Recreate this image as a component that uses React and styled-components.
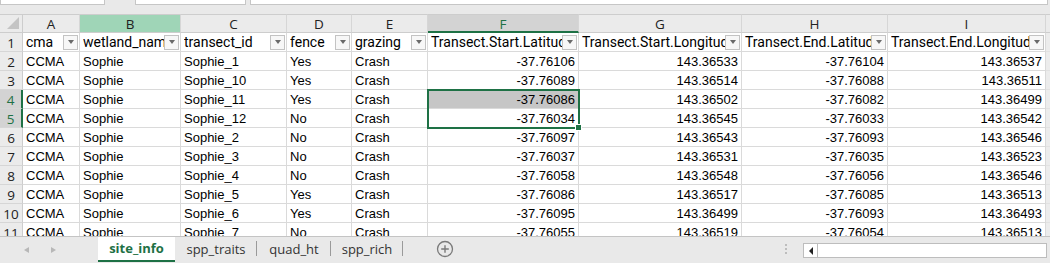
import React from "react";
import styled, { createGlobalStyle, css } from "styled-components";

const GlobalStyle = createGlobalStyle`
  html, body { margin: 0; padding: 0; background: #e9e9e9; overflow: hidden; }
  * { box-sizing: border-box; }
`;

const COLS = [
  { key: "A", w: 57, title: "cma" },
  { key: "B", w: 101, title: "wetland_name" },
  { key: "C", w: 106, title: "transect_id" },
  { key: "D", w: 65, title: "fence" },
  { key: "E", w: 76, title: "grazing" },
  { key: "F", w: 151, title: "Transect.Start.Latitude", num: true },
  { key: "G", w: 163, title: "Transect.Start.Longitude", num: true },
  { key: "H", w: 146, title: "Transect.End.Latitude", num: true },
  { key: "I", w: 158, title: "Transect.End.Longitude", num: true },
];

const ROWS = [
  ["Sophie_1", "Yes", "-37.76106", "143.36533", "-37.76104", "143.36537"],
  ["Sophie_10", "Yes", "-37.76089", "143.36514", "-37.76088", "143.36511"],
  ["Sophie_11", "Yes", "-37.76086", "143.36502", "-37.76082", "143.36499"],
  ["Sophie_12", "No", "-37.76034", "143.36545", "-37.76033", "143.36542"],
  ["Sophie_2", "No", "-37.76097", "143.36543", "-37.76093", "143.36546"],
  ["Sophie_3", "No", "-37.76037", "143.36531", "-37.76035", "143.36523"],
  ["Sophie_4", "No", "-37.76058", "143.36548", "-37.76056", "143.36546"],
  ["Sophie_5", "Yes", "-37.76086", "143.36517", "-37.76085", "143.36513"],
  ["Sophie_6", "Yes", "-37.76095", "143.36499", "-37.76093", "143.36493"],
  ["Sophie_7", "No", "-37.76055", "143.36519", "-37.76054", "143.36513"],
];

const GREEN = "#1e7145";

const Frame = styled.div`
  width: 1050px;
  height: 263px;
  display: flex;
  flex-direction: column;
  background: #e9e9e9;
`;

const TopStrip = styled.div`
  height: 14px;
  display: flex;
  align-items: flex-start;
`;

const FormulaBox = styled.div`
  height: 5px;
  width: ${(p) => p.$w}px;
  margin-left: ${(p) => p.$ml || 0}px;
  background: #fff;
  border: 1px solid #c6c6c6;
  border-top: none;
`;

const Sheet = styled.div`
  position: relative;
  height: 222px;
  overflow: hidden;
  display: grid;
  grid-template-columns: 23px ${COLS.map((c) => c.w + "px").join(" ")} 1fr;
  grid-auto-rows: 19px;
  background: #fff;
`;

const Corner = styled.div`
  background: #ebebeb;
  border-right: 1px solid #cdcdcd;
  border-bottom: 1px solid #cdcdcd;
  border-top: 1px solid #cdcdcd;
  position: relative;
  &::after {
    content: "";
    position: absolute;
    right: 3px;
    bottom: 3px;
    width: 0;
    height: 0;
    border-left: 12px solid transparent;
    border-bottom: 12px solid #c4c4c4;
  }
`;

const ColHead = styled.div`
  background: #ebebeb;
  border-top: 1px solid #cdcdcd;
  border-right: 1px solid #d6d6d6;
  border-bottom: 1px solid #cdcdcd;
  font-family: "Open Sans", "Liberation Sans", sans-serif;
  font-size: 13.5px;
  color: #222;
  display: flex;
  align-items: center;
  justify-content: center;
  padding-top: 1px;
  ${(p) =>
    p.$state === "green" &&
    css`
      background: #9fd5b7;
    `}
  ${(p) =>
    p.$state === "sel" &&
    css`
      background: #d3d3d3;
      color: ${GREEN};
      border-bottom: 2px solid ${GREEN};
    `}
  ${(p) =>
    p.$state === "end" &&
    css`
      border-right: none;
    `}
`;

const RowHead = styled.div`
  background: #ebebeb;
  border-right: 1px solid #cdcdcd;
  border-bottom: 1px solid #d6d6d6;
  font-family: "Open Sans", "Liberation Sans", sans-serif;
  font-size: 13.5px;
  color: #222;
  display: flex;
  align-items: center;
  justify-content: center;
  padding-top: 1px;
  ${(p) =>
    p.$sel &&
    css`
      background: #d3d3d3;
      color: ${GREEN};
      border-right: 2px solid ${GREEN};
    `}
`;

const Cell = styled.div`
  border-right: 1px solid #dadada;
  border-bottom: 1px solid #dadada;
  font-family: "Liberation Sans", Arial, sans-serif;
  font-size: 13px;
  color: #000;
  white-space: nowrap;
  overflow: hidden;
  line-height: 18px;
  padding: 1px 3px 0 3px;
  text-align: ${(p) => (p.$num ? "right" : "left")};
  background: ${(p) => (p.$fill ? "#c6c6c6" : "#fff")};
`;

const HeadCell = styled(Cell)`
  display: flex;
  align-items: center;
  padding: 0 1px 0 3px;
  text-align: left;
  font-family: Roboto, "Liberation Sans", sans-serif;
  font-size: 14px;
`;

const HeadText = styled.span`
  flex: 1;
  min-width: 0;
  overflow: hidden;
  white-space: nowrap;
`;

const FilterBtn = styled.span`
  flex: none;
  width: 15px;
  height: 15px;
  border: 1px solid #c3c3c3;
  background: #f7f7f7;
  display: flex;
  align-items: center;
  justify-content: center;
  &::before {
    content: "";
    border-left: 3.5px solid transparent;
    border-right: 3.5px solid transparent;
    border-top: 4px solid #6a6a6a;
  }
`;

const Gutter = styled.div`
  background: #ececec;
  border-bottom: 1px solid #e2e2e2;
`;

const Selection = styled.div`
  position: absolute;
  left: 427px;
  top: 75px;
  width: 153px;
  height: 40px;
  border: 2px solid ${GREEN};
  pointer-events: none;
  &::after {
    content: "";
    position: absolute;
    right: -4px;
    bottom: -4px;
    width: 5px;
    height: 5px;
    background: ${GREEN};
    border: 1px solid #fff;
  }
`;

const TabBar = styled.div`
  height: 27px;
  border-top: 1px solid #c4c4c4;
  background: #e9e9e9;
  display: flex;
  align-items: stretch;
`;

const NavArea = styled.div`
  width: 98px;
  display: flex;
  align-items: center;
  padding-left: 24px;
  gap: 22px;
`;

const NavArrow = styled.span`
  width: 0;
  height: 0;
  border-top: 3.5px solid transparent;
  border-bottom: 3.5px solid transparent;
  ${(p) =>
    p.$dir === "left"
      ? css`border-right: 5px solid #b8b8b8;`
      : css`border-left: 5px solid #b8b8b8;`}
`;

const Tab = styled.div`
  width: ${(p) => p.$w}px;
  display: flex;
  align-items: center;
  justify-content: center;
  font-family: "Open Sans", "Liberation Sans", sans-serif;
  font-size: 13px;
  color: #333;
  position: relative;
  padding-bottom: 2px;
  ${(p) =>
    p.$active
      ? css`
          background: #fff;
          color: ${GREEN};
          font-weight: 700;
          border-bottom: 2px solid ${GREEN};
          margin-bottom: 1px;
        `
      : css`
          &::after {
            content: "";
            position: absolute;
            right: 0;
            top: 4px;
            bottom: 7px;
            width: 1px;
            background: #9a9a9a;
          }
        `}
`;

const AddBtn = styled.div`
  width: 34px;
  margin-left: 33px;
  display: flex;
  align-items: center;
  justify-content: flex-start;
  padding-bottom: 2px;
`;

const Spacer = styled.div`
  flex: 1;
`;

const Grip = styled.div`
  width: 6px;
  margin-right: 14px;
  display: flex;
  flex-direction: column;
  justify-content: center;
  align-items: center;
  gap: 2px;
  padding-bottom: 3px;
  & > i {
    width: 2px;
    height: 2px;
    background: #bdbdbd;
  }
`;

const HScroll = styled.div`
  width: 244px;
  height: 15px;
  margin-top: 6px;
  margin-right: 3px;
  background: #fff;
  border: 1px solid #bdbdbd;
  display: flex;
`;

const ScrollBtn = styled.div`
  width: 14px;
  border-right: 1px solid #bdbdbd;
  display: flex;
  align-items: center;
  justify-content: center;
  &::before {
    content: "";
    border-top: 4px solid transparent;
    border-bottom: 4px solid transparent;
    border-right: 4px solid #222;
  }
`;

const PlusIcon = () => (
  <svg width="18" height="18" viewBox="0 0 18 18">
    <circle cx="9" cy="9" r="7.5" fill="none" stroke="#7a7a7a" strokeWidth="1.3" />
    <path d="M9 5.2v7.6M5.2 9h7.6" stroke="#7a7a7a" strokeWidth="1.4" />
  </svg>
);

export default function App() {
  const colState = (k) => (k === "B" ? "green" : k === "F" ? "sel" : undefined);
  return (
    <Frame>
      <GlobalStyle />
      <TopStrip>
        <FormulaBox $w={105} />
        <FormulaBox $w={111} $ml={30} />
        <FormulaBox $w={798} $ml={4} />
      </TopStrip>
      <Sheet>
        <Corner />
        {COLS.map((c) => (
          <ColHead key={c.key} $state={colState(c.key)}>
            {c.key}
          </ColHead>
        ))}
        <ColHead $state="end" />

        <RowHead>1</RowHead>
        {COLS.map((c) => (
          <HeadCell key={c.key}>
            <HeadText>{c.title}</HeadText>
            <FilterBtn />
          </HeadCell>
        ))}
        <Gutter />

        {ROWS.map((r, i) => {
          const n = i + 2;
          const vals = ["CCMA", "Sophie", r[0], r[1], "Crash", r[2], r[3], r[4], r[5]];
          return (
            <React.Fragment key={n}>
              <RowHead $sel={n === 4 || n === 5}>{n}</RowHead>
              {vals.map((v, j) => (
                <Cell key={j} $num={COLS[j].num} $fill={n === 4 && j === 5}>
                  {v}
                </Cell>
              ))}
              <Gutter />
            </React.Fragment>
          );
        })}
        <Selection />
      </Sheet>
      <TabBar>
        <NavArea>
          <NavArrow $dir="left" />
          <NavArrow $dir="right" />
        </NavArea>
        <Tab $w={77} $active>site_info</Tab>
        <Tab $w={82}>spp_traits</Tab>
        <Tab $w={74}>quad_ht</Tab>
        <Tab $w={72}>spp_rich</Tab>
        <AddBtn>
          <PlusIcon />
        </AddBtn>
        <Spacer />
        <Grip>
          <i />
          <i />
          <i />
        </Grip>
        <HScroll>
          <ScrollBtn />
        </HScroll>
      </TabBar>
    </Frame>
  );
}
